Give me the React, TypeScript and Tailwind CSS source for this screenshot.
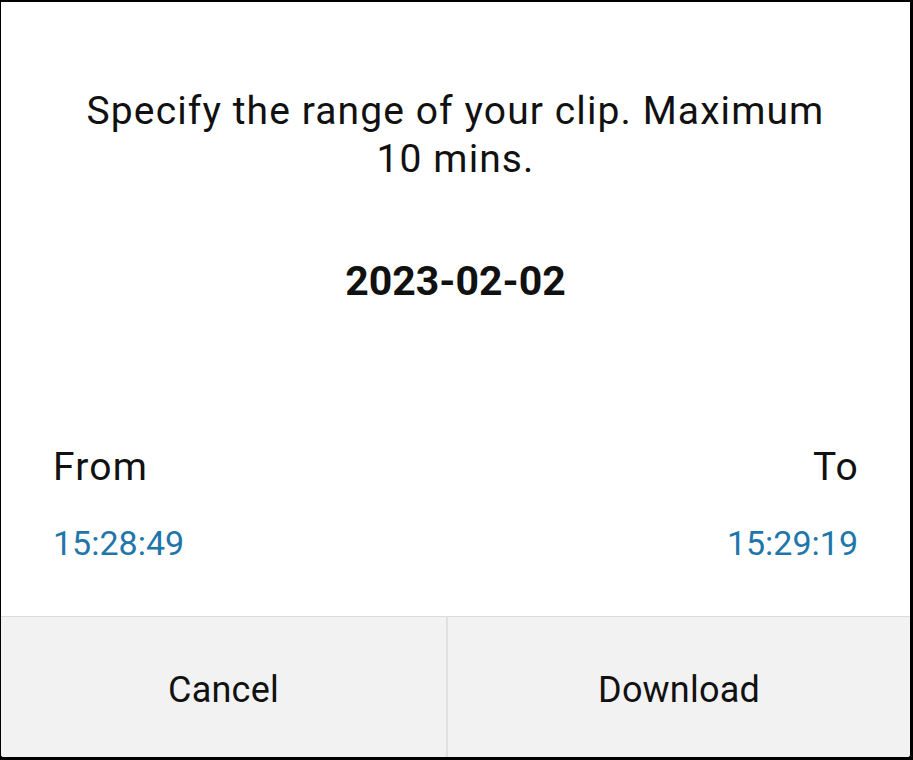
import React from "react";

const App = () => {
  return (
    <div className="w-[913px] h-[760px] bg-black pt-[2px] pl-[1px] pr-[3px] pb-[3px] flex">
      <div
        className="flex-1 flex flex-col bg-white rounded-b-[3px] overflow-hidden text-[#111]"
        style={{ fontFamily: "Roboto, 'Liberation Sans', sans-serif" }}
      >
        <div className="flex-1 flex flex-col px-[52px] pt-[85px]">
          <p className="text-center text-[39px] leading-[48px] tracking-[1.1px] px-[20px]">
            Specify the range of your clip. Maximum 10 mins.
          </p>
          <p className="mt-[73px] text-center text-[41px] leading-[50px] font-bold">
            2023-02-02
          </p>
          <div className="mt-[137px] flex justify-between text-[39px] leading-[48px] tracking-[1.2px]">
            <span>From</span>
            <span className="-mr-[1px]">To</span>
          </div>
          <div className="mt-[32px] flex justify-between text-[34px] leading-[40px] text-[#1f76aa]">
            <span>15:28:49</span>
            <span>15:29:19</span>
          </div>
        </div>
        <div className="h-[141px] flex border-t border-[#dcdcdc] bg-[#f2f2f2] text-[36px] tracking-[0.2px] text-[#111]">
          <button className="w-[445px] flex items-center justify-center pt-[5px]">Cancel</button>
          <div className="w-[2px] bg-[#e0e0e0]" />
          <button className="flex-1 flex items-center justify-center pt-[5px]">Download</button>
        </div>
      </div>
    </div>
  );
};

export default App;
